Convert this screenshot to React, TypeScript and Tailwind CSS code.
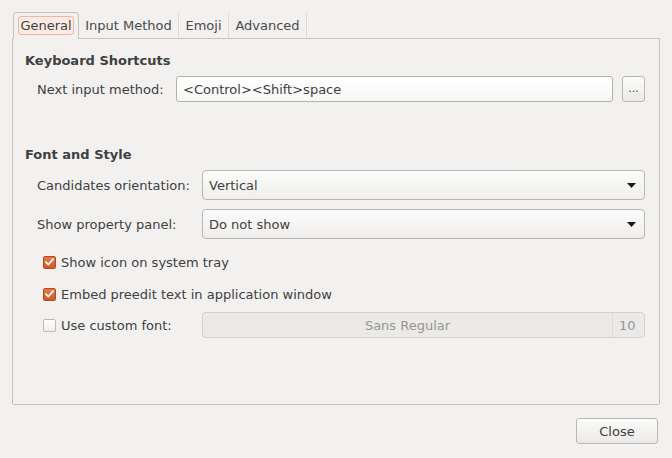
import React from 'react'

const font = { fontFamily: '"DejaVu Sans", Verdana, sans-serif' }

function Arrow() {
  return (
    <svg width="9" height="5" viewBox="0 0 9 5" className="shrink-0">
      <path d="M0 0 H9 L4.5 5 Z" fill="#1a1a1a" />
    </svg>
  )
}

function Check({ checked }: { checked: boolean }) {
  if (!checked) {
    return (
      <div className="w-[13px] h-[13px] shrink-0 rounded-[2px] border border-[#bdbbb8] bg-gradient-to-b from-white to-[#f0efed]" />
    )
  }
  return (
    <div className="w-[13px] h-[13px] shrink-0 rounded-[2px] border border-[#b24a1c] bg-gradient-to-b from-[#e57a4a] to-[#cf5a27] flex items-center justify-center">
      <svg width="9" height="8" viewBox="0 0 9 8">
        <path d="M1 4.2 L3.4 6.5 L8 1.2" fill="none" stroke="white" strokeWidth="1.8" strokeLinecap="round" strokeLinejoin="round" />
      </svg>
    </div>
  )
}

function Combo({ value }: { value: string }) {
  return (
    <div className="ml-auto w-[443px] h-[30px] rounded-[4px] border border-[#b9b7b3] bg-gradient-to-b from-[#fcfcfc] to-[#efeeec] flex items-center pl-[6px] pr-[8px]">
      <span className="flex-1">{value}</span>
      <Arrow />
    </div>
  )
}

export default function App() {
  return (
    <div
      style={font}
      className="w-[672px] h-[458px] bg-[#f2f1f0] text-[13px] leading-[17px] text-[#404040] flex flex-col pt-[12px] px-[12px] overflow-hidden"
    >
      {/* tabs */}
      <div className="flex items-start h-[26px] relative z-10">
        <div className="ml-[1px] w-[66px] h-[27px] border border-b-0 border-[#c6c4c1] rounded-t-[4px] bg-[#f2f1f0] flex items-center justify-center pb-[1px]">
          <span className="px-[1px] h-[19px] flex items-center rounded-[3px] border border-[#f0b49f] bg-[#fbebe5]">
            General
          </span>
        </div>
        <div className="mt-[1px] w-[100px] h-[25px] border-r border-[#dddbd8] flex items-center justify-center text-[#4a4a4a]">
          Input Method
        </div>
        <div className="mt-[1px] w-[50px] h-[25px] border-r border-[#dddbd8] flex items-center justify-center text-[#4a4a4a]">
          Emoji
        </div>
        <div className="mt-[1px] w-[78px] h-[25px] border-r border-[#dddbd8] flex items-center justify-center text-[#4a4a4a]">
          Advanced
        </div>
      </div>

      {/* panel */}
      <div className="h-[367px] border border-[#c6c4c1] rounded-b-[2px] flex flex-col pl-[12px] pr-[14px]">
        <div className="mt-[13px] font-bold">Keyboard Shortcuts</div>

        <div className="mt-[7px] h-[26px] flex items-center pl-[12px]">
          <span className="w-[139px] shrink-0">Next input method:</span>
          <div className="w-[437px] h-[26px] rounded-[3px] border border-[#b3b1ad] bg-gradient-to-b from-white to-[#f7f7f6] flex items-center pl-[6px]">
            &lt;Control&gt;&lt;Shift&gt;space
          </div>
          <button className="ml-[9px] w-[23px] h-[26px] rounded-[3px] border border-[#b9b7b4] bg-gradient-to-b from-[#fbfbfa] to-[#ebeae8] flex items-center justify-center text-[11px] leading-none pb-[2px]">
            ...
          </button>
        </div>

        <div className="mt-[44px] font-bold">Font and Style</div>

        <div className="mt-[7px] h-[30px] flex items-center pl-[12px]">
          <span>Candidates orientation:</span>
          <Combo value="Vertical" />
        </div>
        <div className="mt-[9px] h-[30px] flex items-center pl-[12px]">
          <span>Show property panel:</span>
          <Combo value="Do not show" />
        </div>

        <div className="mt-[13px] h-[20px] flex items-center pl-[18px] gap-[5px]">
          <Check checked />
          <span>Show icon on system tray</span>
        </div>
        <div className="mt-[12px] h-[20px] flex items-center pl-[18px] gap-[5px]">
          <Check checked />
          <span>Embed preedit text in application window</span>
        </div>
        <div className="mt-[8px] h-[26px] flex items-center pl-[18px]">
          <Check checked={false} />
          <span className="ml-[5px]">Use custom font:</span>
          <div className="ml-auto w-[443px] h-[26px] rounded-[4px] border border-[#d3d1ce] bg-[#ebeae8] flex items-center text-[#979593]">
            <span className="flex-1 text-center">Sans Regular</span>
            <span className="w-[32px] h-[24px] border-l border-[#dedcd9] flex items-center pl-[6px]">10</span>
          </div>
        </div>
      </div>

      <div className="mt-[13px] flex justify-end pr-[2px]">
        <button className="w-[82px] h-[26px] rounded-[3px] border border-[#b9b7b4] bg-gradient-to-b from-[#fbfbfa] to-[#ebeae8]">
          Close
        </button>
      </div>
    </div>
  )
}
